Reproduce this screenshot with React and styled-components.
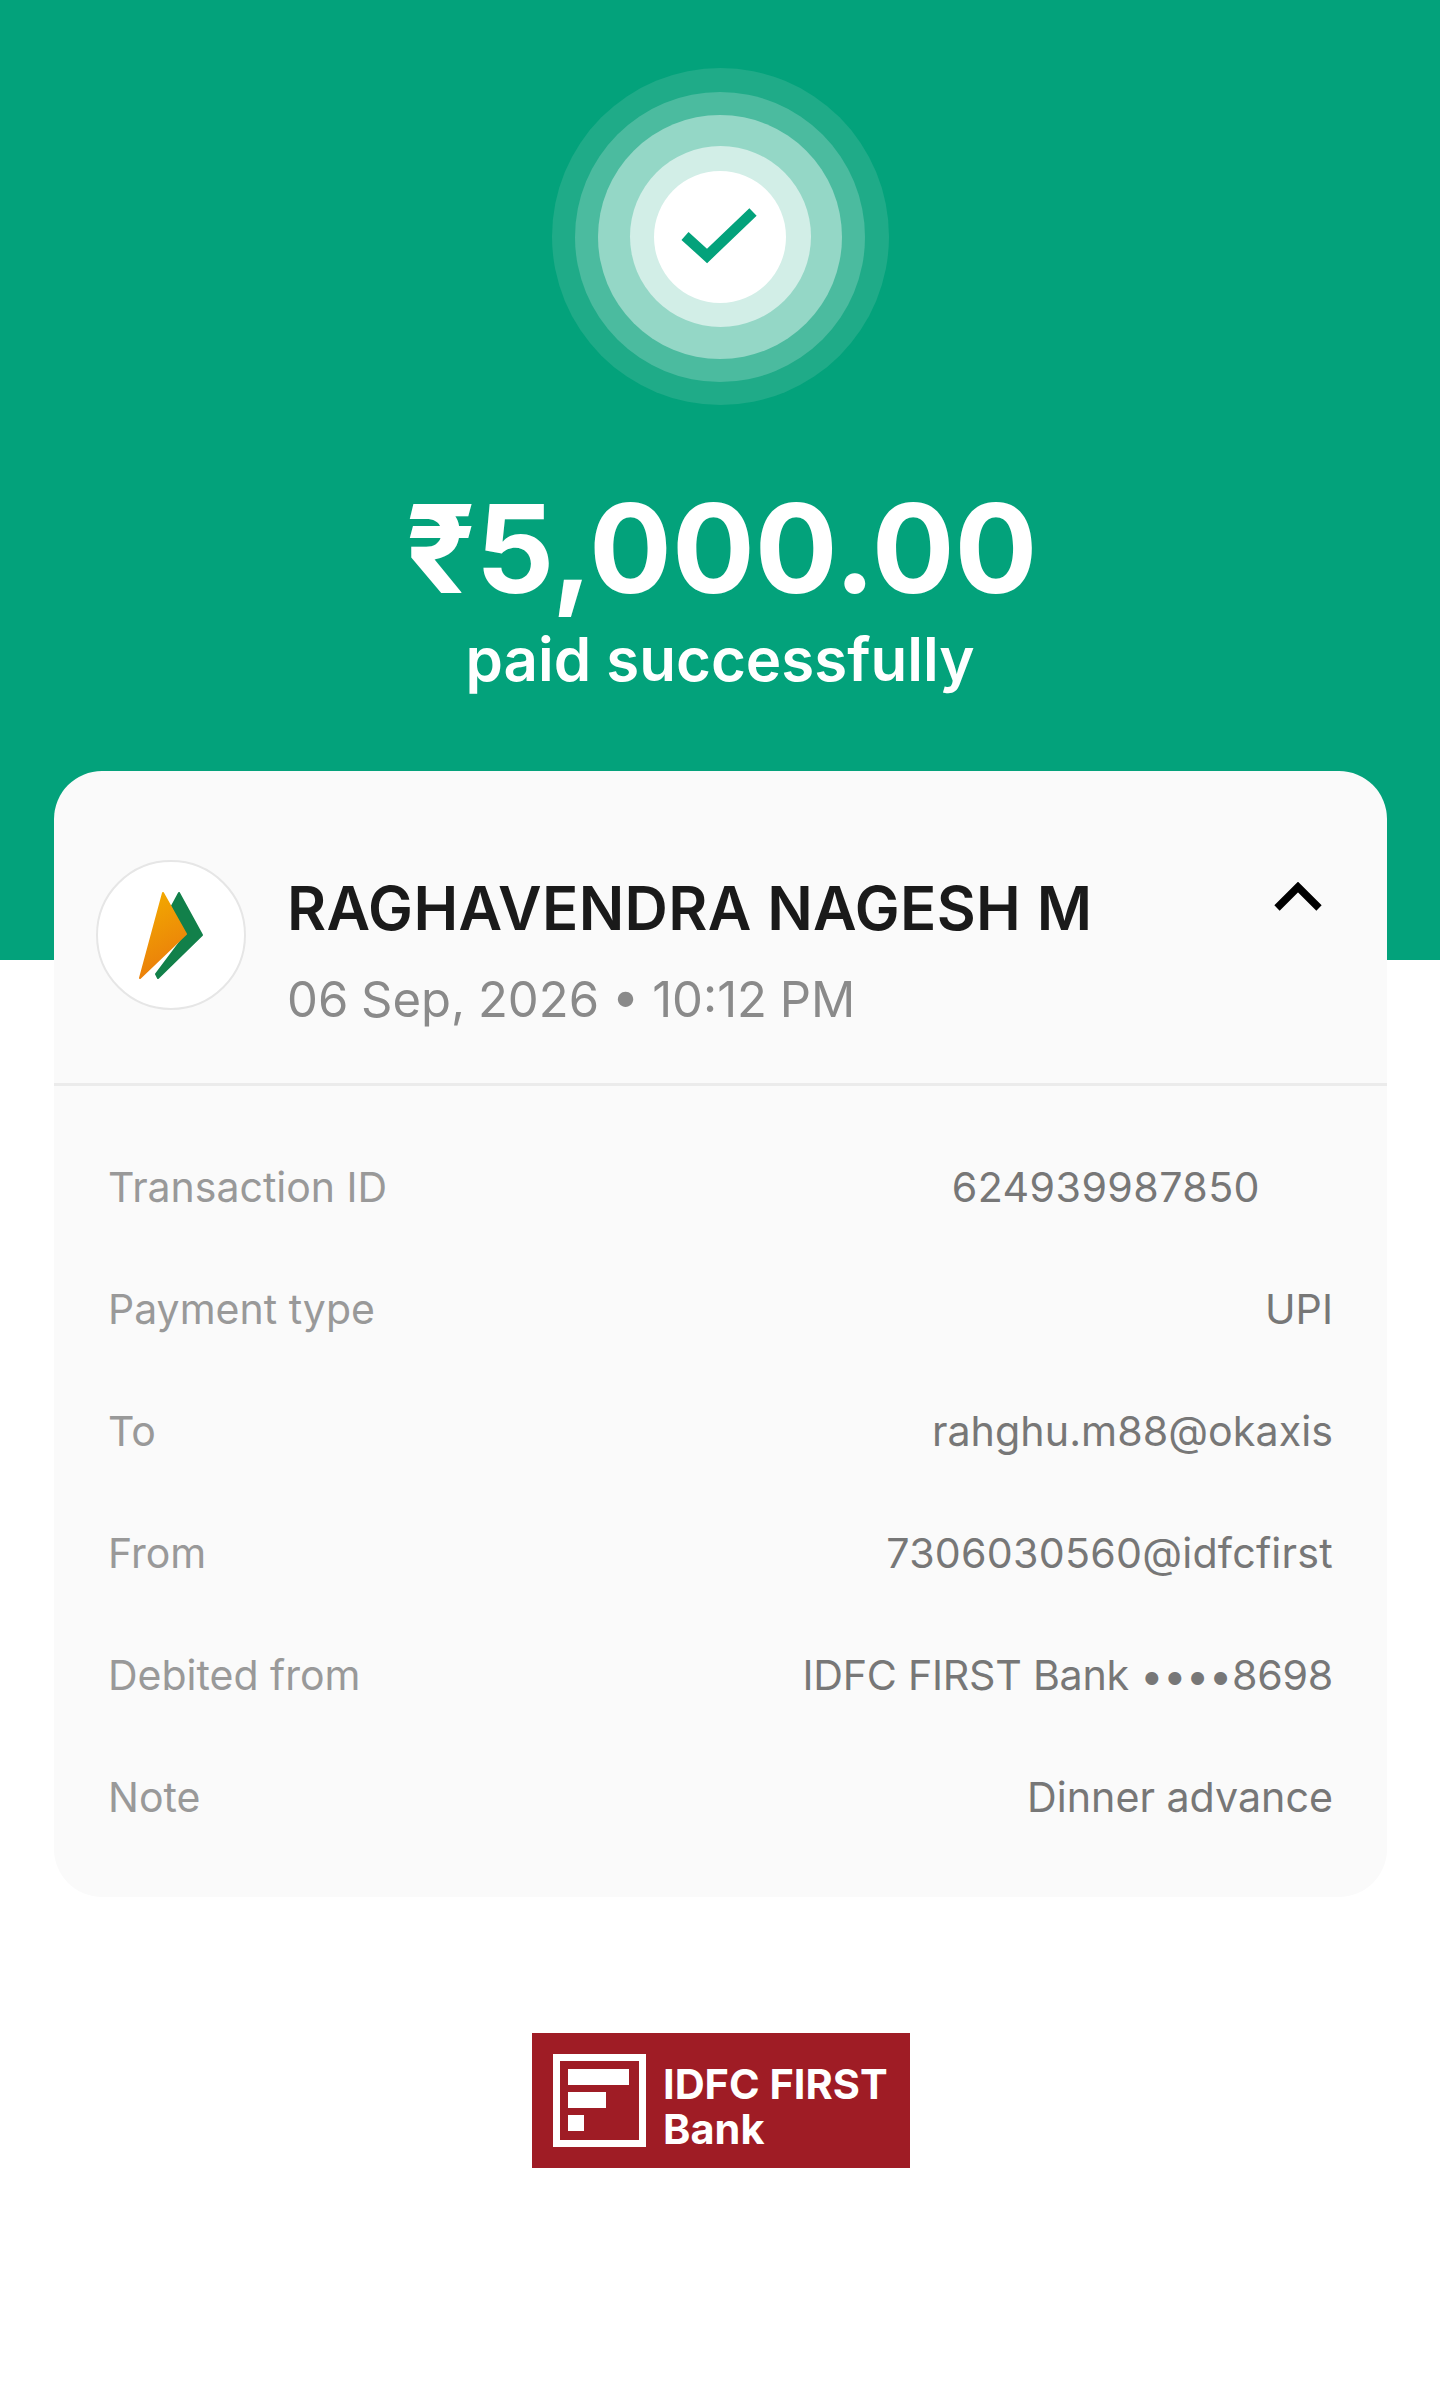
import React from "react";
import styled, { createGlobalStyle } from "styled-components";

const Global = createGlobalStyle`
  html, body { margin: 0; padding: 0; background: #fff; }
  body { font-family: Inter, "Liberation Sans", sans-serif; }
`;
const Page = styled.div`width: 1440px; height: 2405px; background: #fff; overflow: hidden;`;
const Hero = styled.header`
  height: 960px; background: #03a27b; color: #fff; display: flex; flex-direction: column; align-items: center;
  padding-top: 68px; box-sizing: border-box;
`;
const Ring = styled.div`
  width: ${p => p.$size}px; height: ${p => p.$size}px; border-radius: 50%;
  background: ${p => p.$bg}; display: flex; align-items: center; justify-content: center; flex: none;
`;
const Amount = styled.h1`
  margin: 74px 0 0; padding-left: 3px; font-size: 123px; line-height: 140px; font-weight: 700; letter-spacing: 0; color: #fff; white-space: nowrap;
`;
const Paid = styled.p`
  margin: 4px 0 0; font-size: 60px; line-height: 72px; font-weight: 600; color: #fff; white-space: nowrap;
`;
const Card = styled.section`
  margin: -189px 53px 0 54px; height: 1126px; box-sizing: border-box; border-radius: 48px; background: #fafafa; overflow: hidden;
`;
const Head = styled.div`
  height: 315px; box-sizing: border-box; border-bottom: 3px solid #ebebeb; padding: 89px 65px 0 42px;
  display: flex; align-items: flex-start;
`;
const Avatar = styled.div`
  width: 150px; height: 150px; box-sizing: border-box; border: 2px solid #e6e6e6; border-radius: 50%; background: #fff; flex: none;
  display: flex; align-items: center; justify-content: center;
`;
const Who = styled.div`margin-left: 41px; flex: 1; min-width: 0;`;
const Name = styled.div`font-size: 60px; line-height: 72px; font-weight: 600; letter-spacing: 0.35px; color: #1a1a1a; white-space: nowrap; margin-top: 12px;`;
const When = styled.div`font-size: 49px; line-height: 60px; color: #8a8a8a; white-space: nowrap; margin-top: 26px; word-spacing: -1px;`;
const Chevron = styled.svg`width: 48px; height: 30px; flex: none; margin-top: 22px;`;
const Rows = styled.div`padding: 40px 54px 0; display: flex; flex-direction: column;`;
const Row = styled.div`height: 122px; display: flex; align-items: center; justify-content: space-between;`;
const Label = styled.span`color: #999; white-space: nowrap; font-size: 41px;`;
const Value = styled.span`
  color: #777; white-space: nowrap; font-size: 41.2px;
  margin-right: ${p => p.$inset || 0}px; letter-spacing: ${p => p.$track || 0}px;
`;
const Footer = styled.div`display: flex; justify-content: center; margin-top: 136px; padding-left: 2px;`;
const Logo = styled.div`
  width: 378px; height: 135px; box-sizing: border-box; background: #9f1c25; display: flex; align-items: center; padding-left: 21px;
`;
const Mark = styled.svg`width: 93px; height: 93px; flex: none;`;
const LogoText = styled.div`
  margin: 12px 0 0 17px; color: #fff; font-weight: 700; font-size: 41.5px; line-height: 45px; font-family: Inter, "Liberation Sans", sans-serif;
`;
const LogoLine = styled.div`white-space: nowrap;`;

const rows = [
  { k: "Transaction ID", v: "624939987850", inset: 73, track: 0.4 },
  { k: "Payment type", v: "UPI" },
  { k: "To", v: "rahghu.m88@okaxis", track: 0.05 },
  { k: "From", v: "7306030560@idfcfirst", track: 0.23 },
  { k: "Debited from", v: "IDFC FIRST Bank ••••8698", track: -0.25 },
  { k: "Note", v: "Dinner advance" },
];

export default function App() {
  return (
    <Page>
      <Global />
      <Hero>
        <Ring $size={337} $bg="#1fab88">
          <Ring $size={290} $bg="#4bbb9f">
            <Ring $size={244} $bg="#94d7c6">
              <Ring $size={181} $bg="#d2eee7">
                <Ring $size={132} $bg="#fff">
                  <svg width="80" height="60" viewBox="0 0 80 60" fill="none">
                    <path d="M5 29 L27 49 L73 5" stroke="#03a27b" strokeWidth="10.5" />
                  </svg>
                </Ring>
              </Ring>
            </Ring>
          </Ring>
        </Ring>
        <Amount>₹5,000.00</Amount>
        <Paid>paid successfully</Paid>
      </Hero>
      <Card>
        <Head>
          <Avatar>
            <svg width="146" height="146" viewBox="0 0 146 146">
              <defs>
                <linearGradient id="o" x1="0.3" y1="0" x2="0.6" y2="1">
                  <stop offset="0" stopColor="#f2a900" />
                  <stop offset="1" stopColor="#ea7a0c" />
                </linearGradient>
              </defs>
              <path d="M81 31 L104 73 L60 116 L58 112 L88 72 L74 44 Z" fill="#12804a" stroke="#12804a" strokeWidth="2" strokeLinejoin="round" />
              <path d="M65 31 L88 72 L42 116 Z" fill="url(#o)" stroke="url(#o)" strokeWidth="2" strokeLinejoin="round" />
            </svg>
          </Avatar>
          <Who>
            <Name>RAGHAVENDRA NAGESH M</Name>
            <When>06 Sep, 2026 • 10:12 PM</When>
          </Who>
          <Chevron viewBox="0 0 48 30" fill="none">
            <path d="M3 26 L24 5 L45 26" stroke="#000" strokeWidth="7.5" />
          </Chevron>
        </Head>
        <Rows>
          {rows.map(({ k, v, inset, track }) => (
            <Row key={k}>
              <Label>{k}</Label>
              <Value $inset={inset} $track={track}>{v}</Value>
            </Row>
          ))}
        </Rows>
      </Card>
      <Footer>
        <Logo>
          <Mark viewBox="0 0 93 93" fill="none">
            <rect x="3.5" y="3.5" width="86" height="86" stroke="#fff" strokeWidth="7" />
            <rect x="15" y="15" width="61" height="16" fill="#fff" />
            <rect x="15" y="38" width="38" height="16" fill="#fff" />
            <rect x="15" y="61" width="16" height="16" fill="#fff" />
          </Mark>
          <LogoText>
            <LogoLine>IDFC FIRST</LogoLine>
            <LogoLine>Bank</LogoLine>
          </LogoText>
        </Logo>
      </Footer>
    </Page>
  );
}
